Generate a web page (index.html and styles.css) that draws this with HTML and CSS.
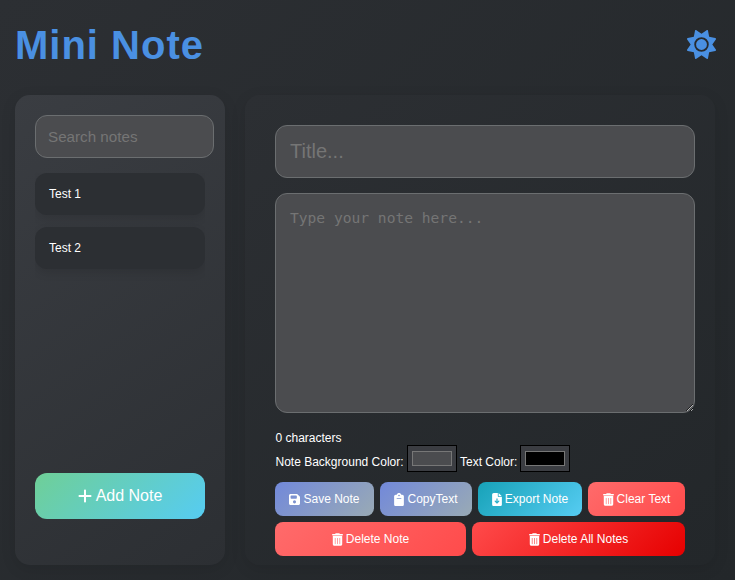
FILE: index.html
```html
<!DOCTYPE html>
<html lang="en">
<head>
<meta charset="utf-8">
<title>Mini Note</title>
<link rel="stylesheet" href="styles.css">
</head>
<body>
<svg class="sprite" aria-hidden="true">
  <symbol id="trash" viewBox="0 0 448 512"><path fill-rule="evenodd" d="M135.2 17.7C140.6 6.8 151.7 0 163.8 0H284.2c12.1 0 23.2 6.800 28.600 17.700L320 32h96c17.700 0 32 14.300 32 32s-14.300 32-32 32H32C14.300 96 0 81.700 0 64S14.300 32 32 32h96l7.200-14.300zM32 112H416V448c0 35.300-28.700 64-64 64H96c-35.300 0-64-28.700-64-64V112zm96 80c-8.800 0-12 7.200-12 16V432c0 8.800 5 16 12 16s12-7.200 12-16V208c0-8.800-5-16-12-16zm96 0c-8.800 0-12 7.200-12 16V432c0 8.800 5 16 12 16s12-7.200 12-16V208c0-8.800-5-16-12-16zm96 0c-8.800 0-12 7.200-12 16V432c0 8.800 5 16 12 16s12-7.200 12-16V208c0-8.800-5-16-12-16z"/></symbol>
</svg>
<header class="header">
  <h1 class="brand">Mini Note</h1>
  <svg class="sun" viewBox="0 0 512 512"><path d="M361.500 1.200c5 2.100 8.600 6.600 9.600 11.900L391 121l107.900 19.800c5.300 1 9.800 4.600 11.900 9.600s1.500 10.700-1.600 15.200L446.900 256l62.300 90.300c3.100 4.500 3.700 10.200 1.600 15.200s-6.600 8.600-11.900 9.600L391 391 371.100 498.900c-1 5.300-4.600 9.800-9.600 11.900s-10.700 1.500-15.200-1.600L256 446.900l-90.300 62.300c-4.500 3.100-10.200 3.700-15.200 1.600s-8.600-6.600-9.600-11.900L121 391 13.100 371.100c-5.300-1-9.800-4.600-11.900-9.600s-1.500-10.700 1.600-15.200L65.100 256 2.800 165.700c-3.100-4.500-3.700-10.200-1.600-15.200s6.600-8.600 11.900-9.600L121 121 140.900 13.100c1-5.300 4.600-9.800 9.600-11.900s10.700-1.500 15.200 1.600L256 65.100 346.300 2.800c4.500-3.100 10.200-3.700 15.200-1.600zM160 256a96 96 0 1 1 192 0 96 96 0 1 1 -192 0zm224 0a128 128 0 1 0 -256 0 128 128 0 1 0 256 0z"/></svg>
</header>
<main class="layout">
  <aside class="sidebar">
    <input class="search" type="text" placeholder="Search notes">
    <ul class="notes">
      <li class="note">Test 1</li>
      <li class="note">Test 2</li>
    </ul>
    <button class="add"><svg class="plus" viewBox="0 0 448 512"><path d="M256 80c0-17.700-14.300-32-32-32s-32 14.300-32 32V224H48c-17.700 0-32 14.300-32 32s14.300 32 32 32H192V432c0 17.700 14.300 32 32 32s32-14.300 32-32V288H400c17.700 0 32-14.300 32-32s-14.300-32-32-32H256V80z"/></svg><span>Add Note</span></button>
  </aside>
  <section class="editor">
    <input class="title" type="text" placeholder="Title...">
    <textarea class="content" placeholder="Type your note here..."></textarea>
    <div class="count">0 characters</div>
    <div class="colors">
      <label for="bg">Note Background Color:</label>
      <input id="bg" class="picker" type="color" value="#4b4c4f">
      <label for="fg">Text Color:</label>
      <input id="fg" class="picker" type="color" value="#000000">
    </div>
    <div class="actions">
      <button class="btn save"><svg class="icon" viewBox="0 0 448 512"><path d="M64 32C28.700 32 0 60.700 0 96V416c0 35.300 28.700 64 64 64H384c35.300 0 64-28.700 64-64V173.300c0-17-6.700-33.300-18.700-45.300L352 50.700C340 38.700 323.700 32 306.700 32H64zm0 96c0-17.700 14.300-32 32-32H288c17.700 0 32 14.300 32 32v64c0 17.700-14.300 32-32 32H96c-17.700 0-32-14.300-32-32V128zM224 288a64 64 0 1 1 0 128 64 64 0 1 1 0-128z"/></svg><span>Save Note</span></button>
      <button class="btn copy"><svg class="icon narrow" viewBox="0 0 384 512"><path d="M192 0c-41.800 0-77.400 26.700-90.500 64H64C28.700 64 0 92.700 0 128V448c0 35.300 28.700 64 64 64H320c35.300 0 64-28.700 64-64V128c0-35.300-28.700-64-64-64H282.500C269.400 26.700 233.800 0 192 0zm0 64a32 32 0 1 1 0 64 32 32 0 1 1 0-64zM112 192H272c8.800 0 16 7.200 16 16s-7.200 16-16 16H112c-8.800 0-16-7.200-16-16s7.200-16 16-16z"/></svg><span>CopyText</span></button>
      <button class="btn export"><svg class="icon narrow" viewBox="0 0 384 512"><path d="M64 0C28.700 0 0 28.700 0 64V448c0 35.300 28.700 64 64 64H320c35.300 0 64-28.700 64-64V160H256c-17.700 0-32-14.300-32-32V0H64zM256 0V128H384L256 0zM216 232V334.100l31-31c9.400-9.400 24.600-9.400 33.900 0s9.400 24.600 0 33.900l-72 72c-9.400 9.400-24.600 9.400-33.900 0l-72-72c-9.400-9.400-9.400-24.600 0-33.900s24.600-9.400 33.900 0l31 31V232c0-13.300 10.700-24 24-24s24 10.700 24 24z"/></svg><span>Export Note</span></button>
      <button class="btn clear"><svg class="icon"><use href="#trash"/></svg><span>Clear Text</span></button>
      <button class="btn delete"><svg class="icon"><use href="#trash"/></svg><span>Delete Note</span></button>
      <button class="btn delete-all"><svg class="icon"><use href="#trash"/></svg><span>Delete All Notes</span></button>
    </div>
  </section>
</main>
</body>
</html>
```
FILE: styles.css
```css
* { box-sizing: border-box; }
html { height: 100%; }
body {
  margin: 0;
  height: 580px;
  padding: 15px 20px 15px 15px;
  display: flex;
  flex-direction: column;
  overflow: hidden;
  background: linear-gradient(135deg, #2c2f33, #23272a);
  color: #fff;
  font: 12px "Liberation Sans", Arial, sans-serif;
}
.sprite { display: none; }
svg { fill: currentColor; }
.header {
  height: 60px;
  margin-bottom: 20px;
  display: flex;
  align-items: center;
  justify-content: space-between;
  color: #4a90e2;
}
.brand { margin: 0; font-size: 40px; line-height: 60px; letter-spacing: 1px; }
.sun { width: 29px; height: 29px; margin: 0 -.5px 2px 0; }
.layout { flex: 1; display: flex; gap: 20px; }
.sidebar {
  width: 210px;
  padding: 20px;
  display: flex;
  flex-direction: column;
  border-radius: 15px;
  background: linear-gradient(145deg, #3a3d42, #2c2f33);
  box-shadow: 0 4px 15px rgba(0, 0, 0, .1);
}
input, textarea, button { font-family: inherit; }
.search, .title, .content {
  border: 1px solid #6b6e70;
  border-radius: 12px;
  background: #4b4c4f;
  color: #fff;
  outline: 0;
}
::placeholder { color: #757575; }
.search { width: 179px; height: 43px; padding: 0 12px; font-size: 15.2px; }
.notes { flex: 1; margin: 15px 0 0; padding: 0; list-style: none; overflow: hidden; }
.note {
  height: 42px;
  padding: 0 14px;
  margin-bottom: 12px;
  line-height: 42px;
  border-radius: 12px;
  background: #2c2f33;
  box-shadow: 0 4px 10px rgba(0, 0, 0, .1);
}
.add {
  height: 46px;
  margin-bottom: 26px;
  padding: 0;
  border: 0;
  border-radius: 12px;
  display: flex;
  align-items: center;
  justify-content: center;
  gap: 4px;
  color: #fff;
  font-size: 16px;
  background: linear-gradient(135deg, #6fcf97, #56ccf2);
}
.plus { width: 14px; height: 16px; }
.editor {
  flex: 1;
  padding: 30px 20px 9px 30px;
  border-radius: 15px;
  background: linear-gradient(145deg, #2c2f33, #23272a);
  box-shadow: 0 4px 15px rgba(0, 0, 0, .1);
}
.title { display: block; width: 420px; height: 53px; padding: 0 14px; font-size: 20px; }
.content {
  display: block;
  width: 420px;
  height: 220px;
  margin: 15px 0 0;
  padding: 14px;
  font: 14.6px/19px "DejaVu Sans Mono", monospace;
}
.count { margin-top: 18px; padding-left: .5px; line-height: 14px; }
.colors { height: 27px; padding-left: .5px; display: flex; align-items: center; gap: 3px; }
.colors label { padding-top: 6px; }
.picker {
  width: 50px;
  height: 27px;
  margin: 0;
  padding: 1px 2px;
  border: 1px solid #000;
  background: #3b3d42;
}
#bg { margin-left: .4px; }
#fg { margin-left: -.8px; }
.picker::-webkit-color-swatch-wrapper { padding: 4px 2px; }
.picker::-webkit-color-swatch { border: 1px solid #777; }
.actions { width: 410px; margin-top: 10px; display: flex; flex-wrap: wrap; gap: 6px; }
.btn {
  height: 34px;
  padding: 0;
  border: 0;
  border-radius: 8px;
  display: flex;
  align-items: center;
  justify-content: center;
  gap: 3px;
  color: #fff;
  font-size: 12px;
  white-space: nowrap;
}
.icon { width: 11px; height: 13px; }
.narrow { width: 10px; height: 13px; }
.save, .copy { background: linear-gradient(135deg, #7289da, #99aab5); }
.save { width: 99px; }
.copy { width: 92px; }
.export { width: 104px; background: linear-gradient(135deg, #17a2b8, #56ccf2); }
.clear { width: 97px; }
.clear, .delete { background: linear-gradient(135deg, #ff6b6b, #ff4b4b); }
.delete { width: 191px; }
.delete-all { width: 213px; background: linear-gradient(135deg, #ff4b4b, #e60000); }
```
